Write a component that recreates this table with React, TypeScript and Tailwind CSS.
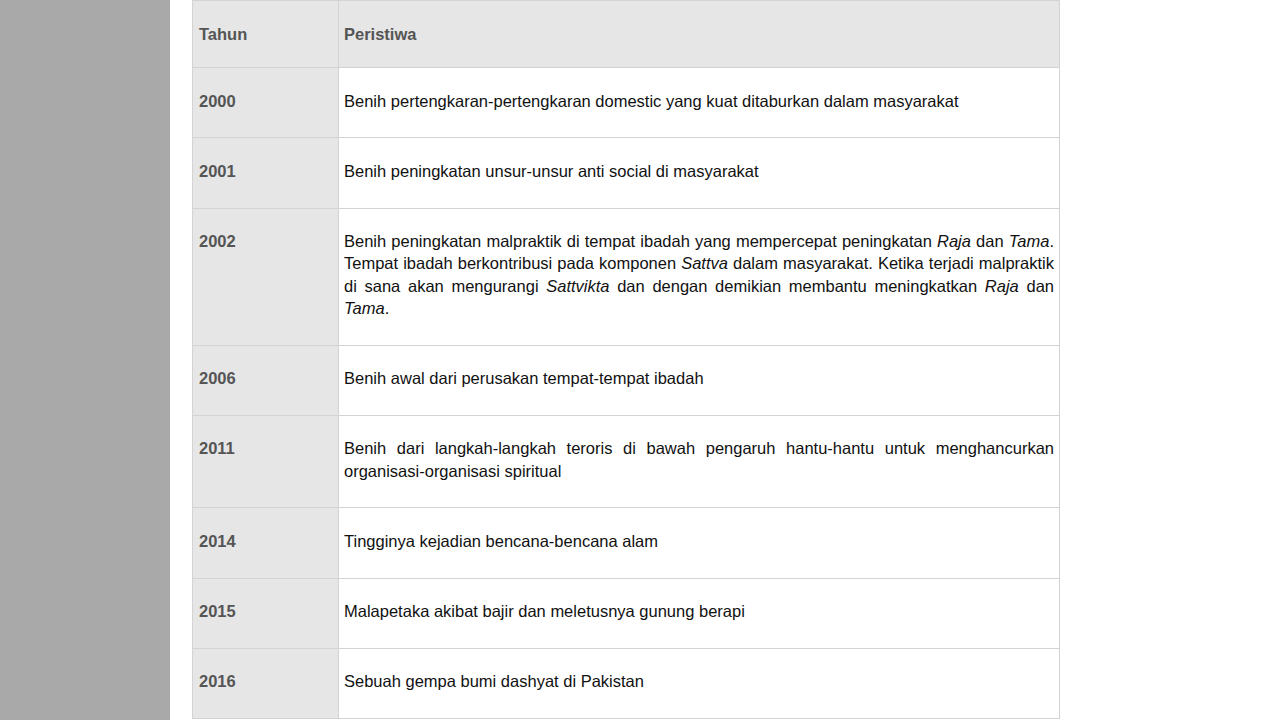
import React from 'react';

type Row = { year: string; text: React.ReactNode };

const rows: Row[] = [
  { year: '2000', text: 'Benih pertengkaran-pertengkaran domestic yang kuat ditaburkan dalam masyarakat' },
  { year: '2001', text: 'Benih peningkatan unsur-unsur anti social di masyarakat' },
  {
    year: '2002',
    text: (
      <>
        Benih peningkatan malpraktik di tempat ibadah yang mempercepat peningkatan <em>Raja</em> dan <em>Tama</em>.
        Tempat ibadah berkontribusi pada komponen <em>Sattva</em> dalam masyarakat. Ketika terjadi malpraktik di
        sana akan mengurangi <em>Sattvikta</em> dan dengan demikian membantu meningkatkan <em>Raja</em> dan{' '}
        <em>Tama</em>.
      </>
    ),
  },
  { year: '2006', text: 'Benih awal dari perusakan tempat-tempat ibadah' },
  {
    year: '2011',
    text: 'Benih dari langkah-langkah teroris di bawah pengaruh hantu-hantu untuk menghancurkan organisasi-organisasi spiritual',
  },
  { year: '2014', text: 'Tingginya kejadian bencana-bencana alam' },
  { year: '2015', text: 'Malapetaka akibat bajir dan meletusnya gunung berapi' },
  { year: '2016', text: 'Sebuah gempa bumi dashyat di Pakistan' },
];

const App = () => {
  return (
    <div className="flex h-[720px] w-[1280px] overflow-hidden bg-white font-['Liberation_Sans',Arial,sans-serif]">
      <div className="w-[170px] shrink-0 bg-[#a9a9a9]" />
      <div className="pl-[22px]">
        <table className="w-[868px] border-collapse text-[16.5px] leading-[22.2px]">
          <thead>
            <tr>
              <th className="w-[146px] border border-[#d3d3d3] bg-[#e6e6e6] px-[6px] pt-[22px] pb-[21.8px] text-left font-bold text-[#555]">
                Tahun
              </th>
              <th className="border border-[#d3d3d3] bg-[#e6e6e6] px-[5px] pt-[22px] pb-[21.8px] text-left font-bold text-[#555]">
                Peristiwa
              </th>
            </tr>
          </thead>
          <tbody>
            {rows.map((r) => (
              <tr key={r.year}>
                <td className="border border-[#d3d3d3] bg-[#e6e6e6] px-[6px] pt-[21.5px] pb-[25.6px] align-top font-bold text-[#555]">
                  {r.year}
                </td>
                <td className="border border-[#d3d3d3] bg-white px-[5px] pt-[21.5px] pb-[25.6px] align-top text-justify text-[#111]">
                  {r.text}
                </td>
              </tr>
            ))}
          </tbody>
        </table>
      </div>
    </div>
  );
};

export default App;
